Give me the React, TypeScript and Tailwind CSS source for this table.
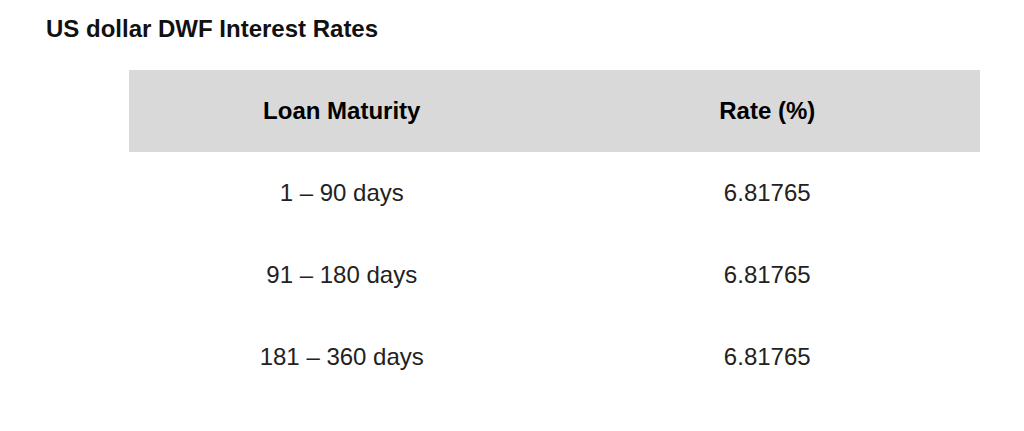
const rows = [
  { term: '1 – 90 days', rate: '6.81765' },
  { term: '91 – 180 days', rate: '6.81765' },
  { term: '181 – 360 days', rate: '6.81765' },
]

export default function App() {
  return (
    <div className="w-[1024px] h-[431px] bg-white text-[#222] font-['Liberation_Sans',Arial,sans-serif]">
      <h1 className="pl-[46px] pt-[15px] text-[24px] leading-[28px] font-bold text-[#111]">US dollar DWF Interest Rates</h1>
      <table className="ml-[129px] mt-[27px] w-[851px] border-collapse text-[24px]">
        <thead>
          <tr className="bg-[#d9d9d9] h-[82px] text-black">
            <th className="w-1/2 font-bold">Loan Maturity</th>
            <th className="w-1/2 font-bold">Rate (%)</th>
          </tr>
        </thead>
        <tbody>
          {rows.map((r) => (
            <tr key={r.term} className="h-[82px]">
              <td className="text-center">{r.term}</td>
              <td className="text-center">{r.rate}</td>
            </tr>
          ))}
        </tbody>
      </table>
    </div>
  )
}
